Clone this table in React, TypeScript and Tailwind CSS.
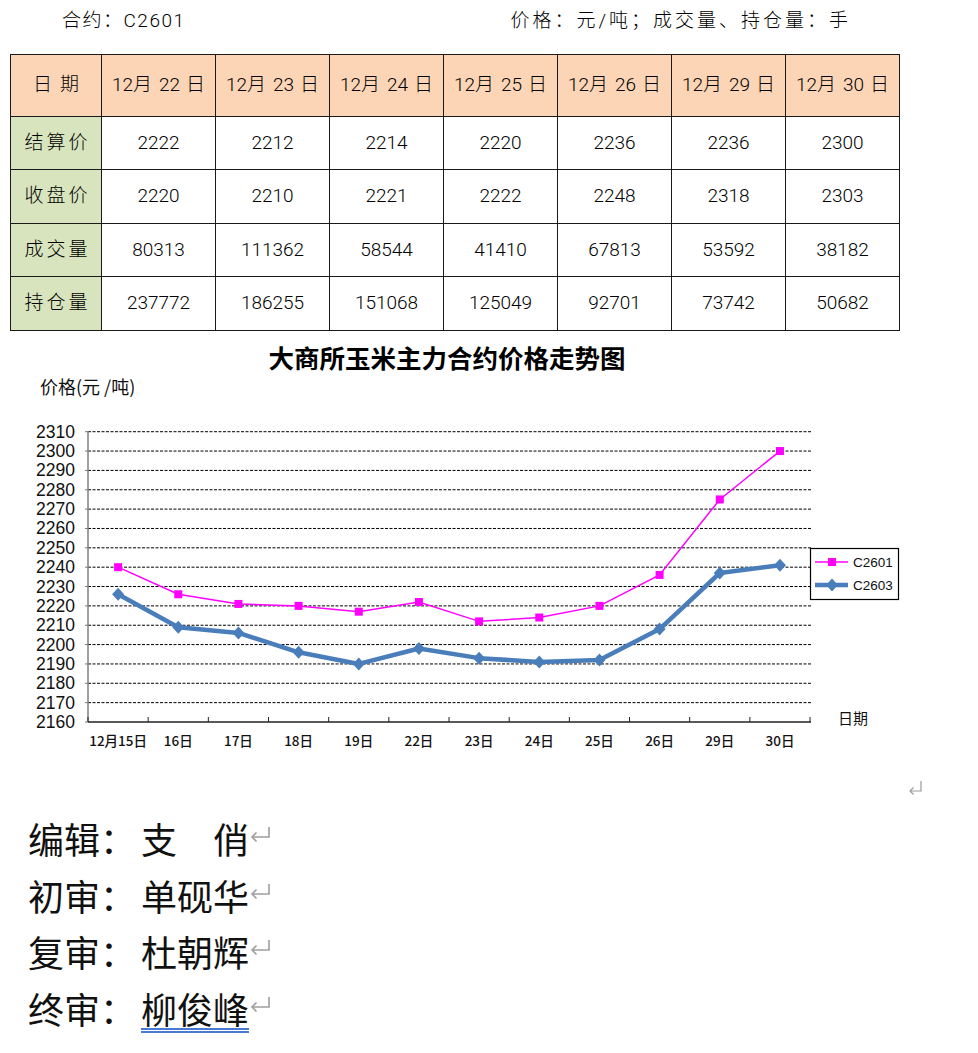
import React from 'react';

const CJK = "'Noto Sans CJK SC', sans-serif";
const TABLE_FONT = "'Roboto', 'Noto Sans CJK SC', sans-serif";

const dates = ['22', '23', '24', '25', '26', '29', '30'];

const rows = [
  { label: '结算价', values: ['2222', '2212', '2214', '2220', '2236', '2236', '2300'] },
  { label: '收盘价', values: ['2220', '2210', '2221', '2222', '2248', '2318', '2303'] },
  { label: '成交量', values: ['80313', '111362', '58544', '41410', '67813', '53592', '38182'] },
  { label: '持仓量', values: ['237772', '186255', '151068', '125049', '92701', '73742', '50682'] },
];

const rowHeights = ['h-[53px]', 'h-[54px]', 'h-[53px]', 'h-[54px]'];

const xLabels = ['12月15日', '16日', '17日', '18日', '19日', '22日', '23日', '24日', '25日', '26日', '29日', '30日'];
const c2601 = [2240, 2226, 2221, 2220, 2217, 2222, 2212, 2214, 2220, 2236, 2275, 2300];
const c2603 = [2226, 2209, 2206, 2196, 2190, 2198, 2193, 2191, 2192, 2208, 2237, 2241];

const X0 = 88;
const STEP = 60.17;
const yOf = (v: number) => 722 - (v - 2160) * 1.9353;
const xOf = (i: number) => X0 + STEP / 2 + i * STEP;

function PriceTable() {
  return (
    <div
      className="ml-[10px] grid w-[890px] grid-cols-[91px_repeat(7,114px)] border-l border-t border-[#1a1a1a] text-[19px] font-light text-black"
      style={{ fontFamily: TABLE_FONT }}
    >
      <div className="flex h-[62px] items-center justify-center border-b border-r border-[#1a1a1a] bg-[#fbd5b5] tracking-[8px] pl-[8px]">
        日期
      </div>
      {dates.map((d) => (
        <div
          key={d}
          className="flex h-[62px] items-center justify-center border-b border-r border-[#1a1a1a] bg-[#fbd5b5]"
        >
          12月<span className="ml-[7px]">{d}</span>
          <span className="ml-[6px]">日</span>
        </div>
      ))}
      {rows.map((row, r) => (
        <React.Fragment key={row.label}>
          <div
            className={`flex ${rowHeights[r]} items-center justify-center border-b border-r border-[#1a1a1a] bg-[#d7e4bd] pl-[3px] tracking-[3px]`}
          >
            {row.label}
          </div>
          {row.values.map((v, i) => (
            <div
              key={i}
              className={`flex ${rowHeights[r]} items-center justify-center border-b border-r border-[#1a1a1a] bg-white`}
            >
              {v}
            </div>
          ))}
        </React.Fragment>
      ))}
    </div>
  );
}

function TrendChart() {
  const grid = [];
  for (let v = 2170; v <= 2310; v += 10) grid.push(v);
  const yTicks = [];
  for (let v = 2160; v <= 2310; v += 10) yTicks.push(v);

  const pink = c2601.map((v, i) => `${xOf(i)},${yOf(v)}`).join(' ');
  const blue = c2603.map((v, i) => `${xOf(i)},${yOf(v)}`).join(' ');

  return (
    <svg width={978} height={428} viewBox="0 372 978 428" className="block">
      <text x={40} y={394} fontSize={18} fontFamily={CJK} fill="#111">
        价格(元 /吨)
      </text>

      {grid.map((v) => (
        <line
          key={v}
          x1={X0}
          x2={811}
          y1={yOf(v)}
          y2={yOf(v)}
          stroke="#000"
          strokeWidth={1}
          strokeDasharray="3 1.5"
        />
      ))}

      {yTicks.map((v) => (
        <g key={v}>
          <line x1={85} x2={88} y1={yOf(v)} y2={yOf(v)} stroke="#777" />
          <text
            x={75}
            y={yOf(v) + 6}
            textAnchor="end"
            fontSize={17.5}
            fontFamily="'Liberation Sans', sans-serif"
            fill="#111"
          >
            {v}
          </text>
        </g>
      ))}

      <line x1={X0} x2={X0} y1={431} y2={722} stroke="#808080" strokeWidth={1.5} />
      <line x1={X0} x2={811} y1={722} y2={722} stroke="#222" strokeWidth={1.5} />
      {Array.from({ length: 13 }, (_, k) => (
        <line key={k} x1={X0 + k * STEP} x2={X0 + k * STEP} y1={717} y2={722} stroke="#222" />
      ))}

      {xLabels.map((l, i) => (
        <text
          key={l}
          x={xOf(i)}
          y={746}
          textAnchor="middle"
          fontSize={13.5}
          fontFamily={CJK}
          fontWeight={500}
          fill="#111"
        >
          {l}
        </text>
      ))}

      <polyline points={pink} fill="none" stroke="#ff00ff" strokeWidth={1.5} />
      {c2601.map((v, i) => (
        <rect key={i} x={xOf(i) - 4} y={yOf(v) - 4} width={8} height={8} fill="#ff00ff" />
      ))}

      <polyline points={blue} fill="none" stroke="#4a7ebb" strokeWidth={4.5} strokeLinejoin="round" />
      {c2603.map((v, i) => {
        const x = xOf(i);
        const y = yOf(v);
        return <polygon key={i} points={`${x},${y - 6.5} ${x + 6},${y} ${x},${y + 6.5} ${x - 6},${y}`} fill="#4a7ebb" />;
      })}

      <rect x={810.5} y={548.5} width={88} height={51} fill="#fff" stroke="#000" strokeWidth={1.2} />
      <line x1={815} x2={848} y1={562} y2={562} stroke="#ff00ff" strokeWidth={1.5} />
      <rect x={828} y={558} width={8} height={8} fill="#ff00ff" />
      <text x={853} y={567} fontSize={13.5} fontFamily="'Liberation Sans', sans-serif" fill="#111">
        C2601
      </text>
      <line x1={815} x2={848} y1={585} y2={585} stroke="#4a7ebb" strokeWidth={4.5} />
      <polygon points="832,578.5 838,585 832,591.5 826,585" fill="#4a7ebb" />
      <text x={853} y={590} fontSize={13.5} fontFamily="'Liberation Sans', sans-serif" fill="#111">
        C2603
      </text>

      <text x={838} y={724} fontSize={15} fontFamily={CJK} fill="#111">
        日期
      </text>

      <g fill="none" stroke="#9a9a9a" strokeWidth={1.2}>
        <path d="M921 781 V791 H910" />
        <path d="M913.5 787.5 L910 791 L913.5 794.5" />
      </g>
    </svg>
  );
}

function Mark() {
  return (
    <svg width={24} height={18} viewBox="0 0 24 18" className="mb-[8px] shrink-0">
      <g fill="none" stroke="#9e9e9e" strokeWidth={1.6}>
        <path d="M20 2 V12 H3" />
        <path d="M7.5 7.5 L3 12 L7.5 16.5" />
      </g>
    </svg>
  );
}

function SignOff() {
  const lines: { role: string; name: React.ReactNode }[] = [
    { role: '编辑', name: '支　俏' },
    { role: '初审', name: '单砚华' },
    { role: '复审', name: '杜朝辉' },
    {
      role: '终审',
      name: (
        <span className="inline-block h-[45px] border-b-[5px] border-double border-[#4a7ad0] leading-[40px]">
          柳俊峰
        </span>
      ),
    },
  ];
  return (
    <div className="pl-[28px] pt-[10px] text-[36px] leading-[56.5px] text-[#111]" style={{ fontFamily: CJK }}>
      {lines.map((l) => (
        <div key={l.role} className="flex h-[56.5px] items-center">
          <span>{l.role}：</span>
          <span className="ml-[5px]">{l.name}</span>
          <Mark />
        </div>
      ))}
    </div>
  );
}

export default function App() {
  return (
    <div className="h-[1053px] w-[978px] overflow-hidden bg-white">
      <div
        className="flex h-[54px] pt-[9px] text-[19px] font-light leading-[24px] text-black"
        style={{ fontFamily: TABLE_FONT }}
      >
        <span className="ml-[62px] tracking-[1.5px]">合约：C2601</span>
        <span className="ml-[325px] tracking-[3px]">价格：元/吨；成交量、持仓量：手</span>
      </div>
      <PriceTable />
      <div
        className="w-[894px] pt-[11px] text-center text-[25.5px] font-bold leading-[30px] text-black"
        style={{ fontFamily: CJK }}
      >
        大商所玉米主力合约价格走势图
      </div>
      <TrendChart />
      <SignOff />
    </div>
  );
}
